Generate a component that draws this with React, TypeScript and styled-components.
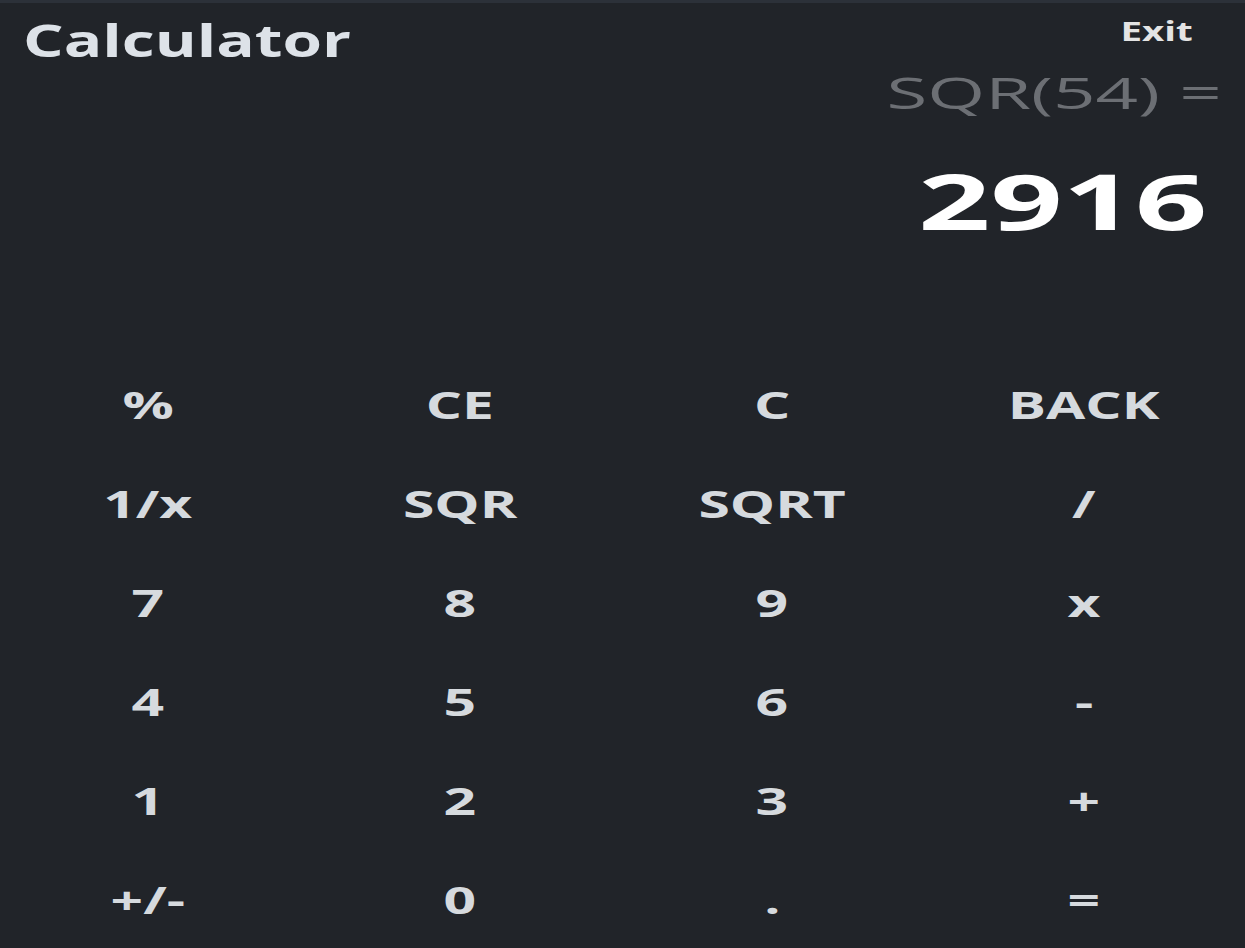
import React from "react";
import styled, { createGlobalStyle } from "styled-components";

const Global = createGlobalStyle`
  html, body {
    margin: 0;
    padding: 0;
    background: #212429;
    overflow: hidden;
  }
  * { box-sizing: border-box; }
`;

const Screen = styled.div`
  width: 1245px;
  height: 948px;
  display: flex;
  flex-direction: column;
  background: #212429;
  font-family: "Open Sans", "DejaVu Sans", sans-serif;
  overflow: hidden;
`;

const TopStrip = styled.div`
  height: 3px;
  background: #2c3139;
  flex: none;
`;

const Header = styled.header`
  display: flex;
  justify-content: space-between;
  align-items: flex-start;
  padding: 14px 52px 0 23px;
`;

const Title = styled.h1`
  margin: 0;
  font-size: 45px;
  line-height: 1;
  font-weight: 700;
  color: #dde2e8;
  transform: scaleX(1.42);
  transform-origin: left center;
`;

const ExitButton = styled.button`
  margin: 1px 0 0;
  padding: 0;
  border: none;
  background: none;
  font-family: inherit;
  font-size: 26px;
  line-height: 1;
  font-weight: 700;
  color: #e4e4e4;
  transform: scaleX(1.48);
  transform-origin: right center;
  cursor: pointer;
`;

const Display = styled.section`
  display: flex;
  flex-direction: column;
  align-items: flex-end;
`;

const Expression = styled.div`
  margin: 9px 23px 0 0;
  font-size: 43px;
  line-height: 1;
  font-weight: 400;
  color: #6c6f74;
  white-space: pre;
  transform: scaleX(1.73);
  transform-origin: right center;
`;

const Result = styled.div`
  margin: 48px 38px 0 0;
  font-size: 77px;
  line-height: 1;
  font-weight: 700;
  color: #ffffff;
  transform: scaleX(1.64);
  transform-origin: right center;
`;

const Keypad = styled.div`
  margin-top: auto;
  margin-left: -8px;
  display: grid;
  grid-template-columns: repeat(4, 312px);
  grid-auto-rows: 99px;
`;

const Key = styled.button`
  display: flex;
  align-items: center;
  justify-content: center;
  padding: 0;
  border: none;
  background: transparent;
  font-family: "Open Sans", "DejaVu Sans", sans-serif;
  font-size: 38px;
  line-height: 1;
  font-weight: 700;
  color: #d6dade;
  cursor: pointer;
`;

const KeyLabel = styled.span`
  display: inline-block;
  transform: scaleX(1.5);
`;

const keys = [
  "%", "CE", "C", "BACK",
  "1/x", "SQR", "SQRT", "/",
  "7", "8", "9", "x",
  "4", "5", "6", "-",
  "1", "2", "3", "+",
  "+/-", "0", ".", "=",
];

export default function App() {
  return (
    <>
      <Global />
      <Screen>
        <TopStrip />
        <Header>
          <Title>Calculator</Title>
          <ExitButton>Exit</ExitButton>
        </Header>
        <Display>
          <Expression>SQR(54) =</Expression>
          <Result>2916</Result>
        </Display>
        <Keypad>
          {keys.map((k) => (
            <Key key={k}>
              <KeyLabel>{k}</KeyLabel>
            </Key>
          ))}
        </Keypad>
      </Screen>
    </>
  );
}
